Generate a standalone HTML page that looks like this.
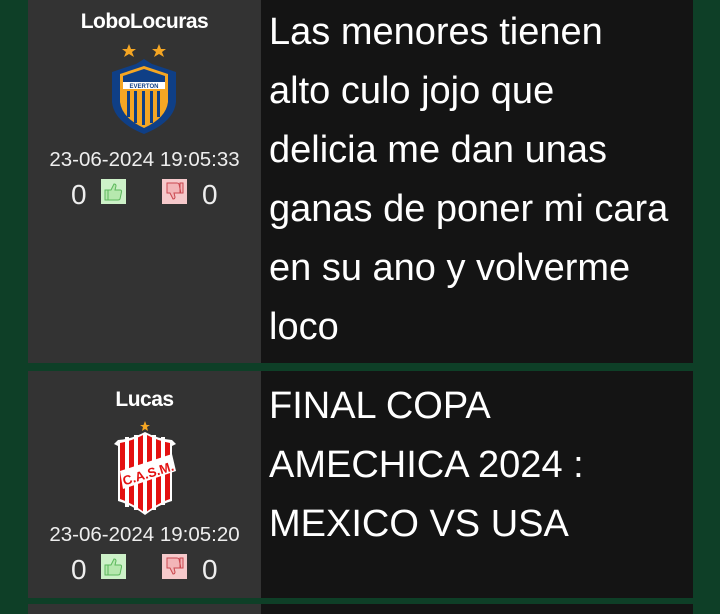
<!DOCTYPE html>
<html><head><style>
body{margin:0;width:720px;height:609px;overflow:hidden;background:#0e3f27;font-family:"Liberation Sans",sans-serif;position:relative}
.l{position:absolute;left:28px;width:233px;background:#333;color:#eee;text-align:center}
.r{position:absolute;left:261px;width:432px;background:#141414;color:#fff;font-size:38px;line-height:59px;padding-left:8px;box-sizing:border-box;white-space:nowrap}
.name{position:absolute;width:100%;font-weight:bold;font-size:21px;color:#fff;letter-spacing:-0.5px}
.date{position:absolute;width:100%;font-size:20.5px;color:#eee}
.v{position:absolute;font-size:28px;color:#eee}
.up,.dn{position:absolute;width:25px;height:25px}
.up{background:#cdf1c8}.dn{background:#f6c9cb}
</style></head><body>
<div class="l" style="top:0;height:363px">
 <div class="name" style="top:10px">LoboLocuras</div>
 <svg style="position:absolute;left:78px;top:42px" width="76" height="92" viewBox="0 0 76 92">
  <polygon points="23,2 25,7 30,7 26,10 28,15 23,12 18,15 20,10 16,7 21,7" fill="#f5a623"/>
  <polygon points="53,2 55,7 60,7 56,10 58,15 53,12 48,15 50,10 46,7 51,7" fill="#f5a623"/>
  <path d="M38,17 L46,22 L70,30 L70,60 Q68,80 38,92 Q8,80 6,60 L6,30 L30,22 Z" fill="#0f3f86"/>
  <path d="M38,24 L62,32 L62,60 Q60,76 38,86 Q16,76 14,60 L14,32 Z" fill="#f5a623"/>
  <path d="M38,27 L59,34 L59,46 L17,46 L17,34 Z" fill="#0f3f86"/>
  <rect x="17" y="40" width="42" height="7" fill="#fff"/>
  <text x="38" y="46" font-size="6" font-weight="bold" text-anchor="middle" fill="#0f3f86" font-family="Liberation Sans">EVERTON</text>
  <g fill="#0f3f86"><rect x="21" y="49" width="3" height="26"/><rect x="28" y="49" width="3" height="32"/><rect x="36" y="49" width="3" height="34"/><rect x="44" y="49" width="3" height="32"/><rect x="51" y="49" width="3" height="26"/></g>
 </svg>
 <div class="date" style="top:148px">23-06-2024 19:05:33</div>
 <div class="v" style="left:43px;top:179px">0</div>
 <svg class="up" style="left:73px;top:179px" viewBox="0 0 25 25"><path d="M7,11 h3 l3,-6 q2,0 2,2 l-1,4 h5 q2,0 1.5,2 l-1.5,7 q-0.5,1 -2,1 h-10 z M4,11 h3 v10 h-3z" fill="#b6e8ae" stroke="#5cb85c" stroke-width="1"/></svg>
 <svg class="dn" style="left:134px;top:179px" viewBox="0 0 25 25"><path d="M5,4 h10 q1.5,0 2,1 l1.5,7 q0.5,2 -1.5,2 h-5 l1,4 q0,2 -2,2 l-3,-6 h-3 z M18,4 h3 v10 h-3z" fill="#f3b5b8" stroke="#c9474f" stroke-width="1"/></svg>
 <div class="v" style="left:174px;top:179px">0</div>
</div>
<div class="r" style="top:0;height:363px;padding-top:3px">Las menores tienen<br>alto culo jojo que<br>delicia me dan unas<br>ganas de poner mi cara<br>en su ano y volverme<br>loco</div>
<div class="l" style="top:371px;height:227px">
 <div class="name" style="top:17px">Lucas</div>
 <svg style="position:absolute;left:80px;top:50px" width="76" height="94" viewBox="0 0 76 94">
  <polygon points="37,0 38.5,4 42,4 39,6 40,10 37,8 34,10 35,6 32,4 35.5,4" fill="#f5a623"/>
  <path d="M6,23 L10,19 Q24,18 37,11 Q50,18 64,19 L68,23 L64,25 L64,80 Q50,84 37,94 Q24,84 10,80 L10,25 Z" fill="#fff"/>
  <path d="M12,22 Q24,20 37,13 Q50,20 62,22 L62,78 Q50,82 37,92 Q24,82 12,78 Z" fill="#e41010"/>
  <g fill="#fff"><rect x="17" y="16" width="4" height="70"/><rect x="26" y="14" width="4" height="75"/><rect x="35" y="12" width="4" height="80"/><rect x="44" y="14" width="4" height="75"/><rect x="53" y="16" width="4" height="68"/></g>
  <polygon points="12,50 64,33 68,50 15,68" fill="#fff"/>
  <text x="40" y="57" font-size="13" font-weight="bold" text-anchor="middle" fill="#e41010" transform="rotate(-17 40 52)" font-family="Liberation Sans">C.A.S.M.</text>
 </svg>
 <div class="date" style="top:152px">23-06-2024 19:05:20</div>
 <div class="v" style="left:43px;top:183px">0</div>
 <svg class="up" style="left:73px;top:183px" viewBox="0 0 25 25"><path d="M7,11 h3 l3,-6 q2,0 2,2 l-1,4 h5 q2,0 1.5,2 l-1.5,7 q-0.5,1 -2,1 h-10 z M4,11 h3 v10 h-3z" fill="#b6e8ae" stroke="#5cb85c" stroke-width="1"/></svg>
 <svg class="dn" style="left:134px;top:183px" viewBox="0 0 25 25"><path d="M5,4 h10 q1.5,0 2,1 l1.5,7 q0.5,2 -1.5,2 h-5 l1,4 q0,2 -2,2 l-3,-6 h-3 z M18,4 h3 v10 h-3z" fill="#f3b5b8" stroke="#c9474f" stroke-width="1"/></svg>
 <div class="v" style="left:174px;top:183px">0</div>
</div>
<div class="r" style="top:371px;height:227px;padding-top:6px">FINAL COPA<br>AMECHICA 2024 :<br>MEXICO VS USA</div>
<div class="l" style="top:604px;height:10px"></div>
<div class="r" style="top:604px;height:10px"></div>
</body></html>
